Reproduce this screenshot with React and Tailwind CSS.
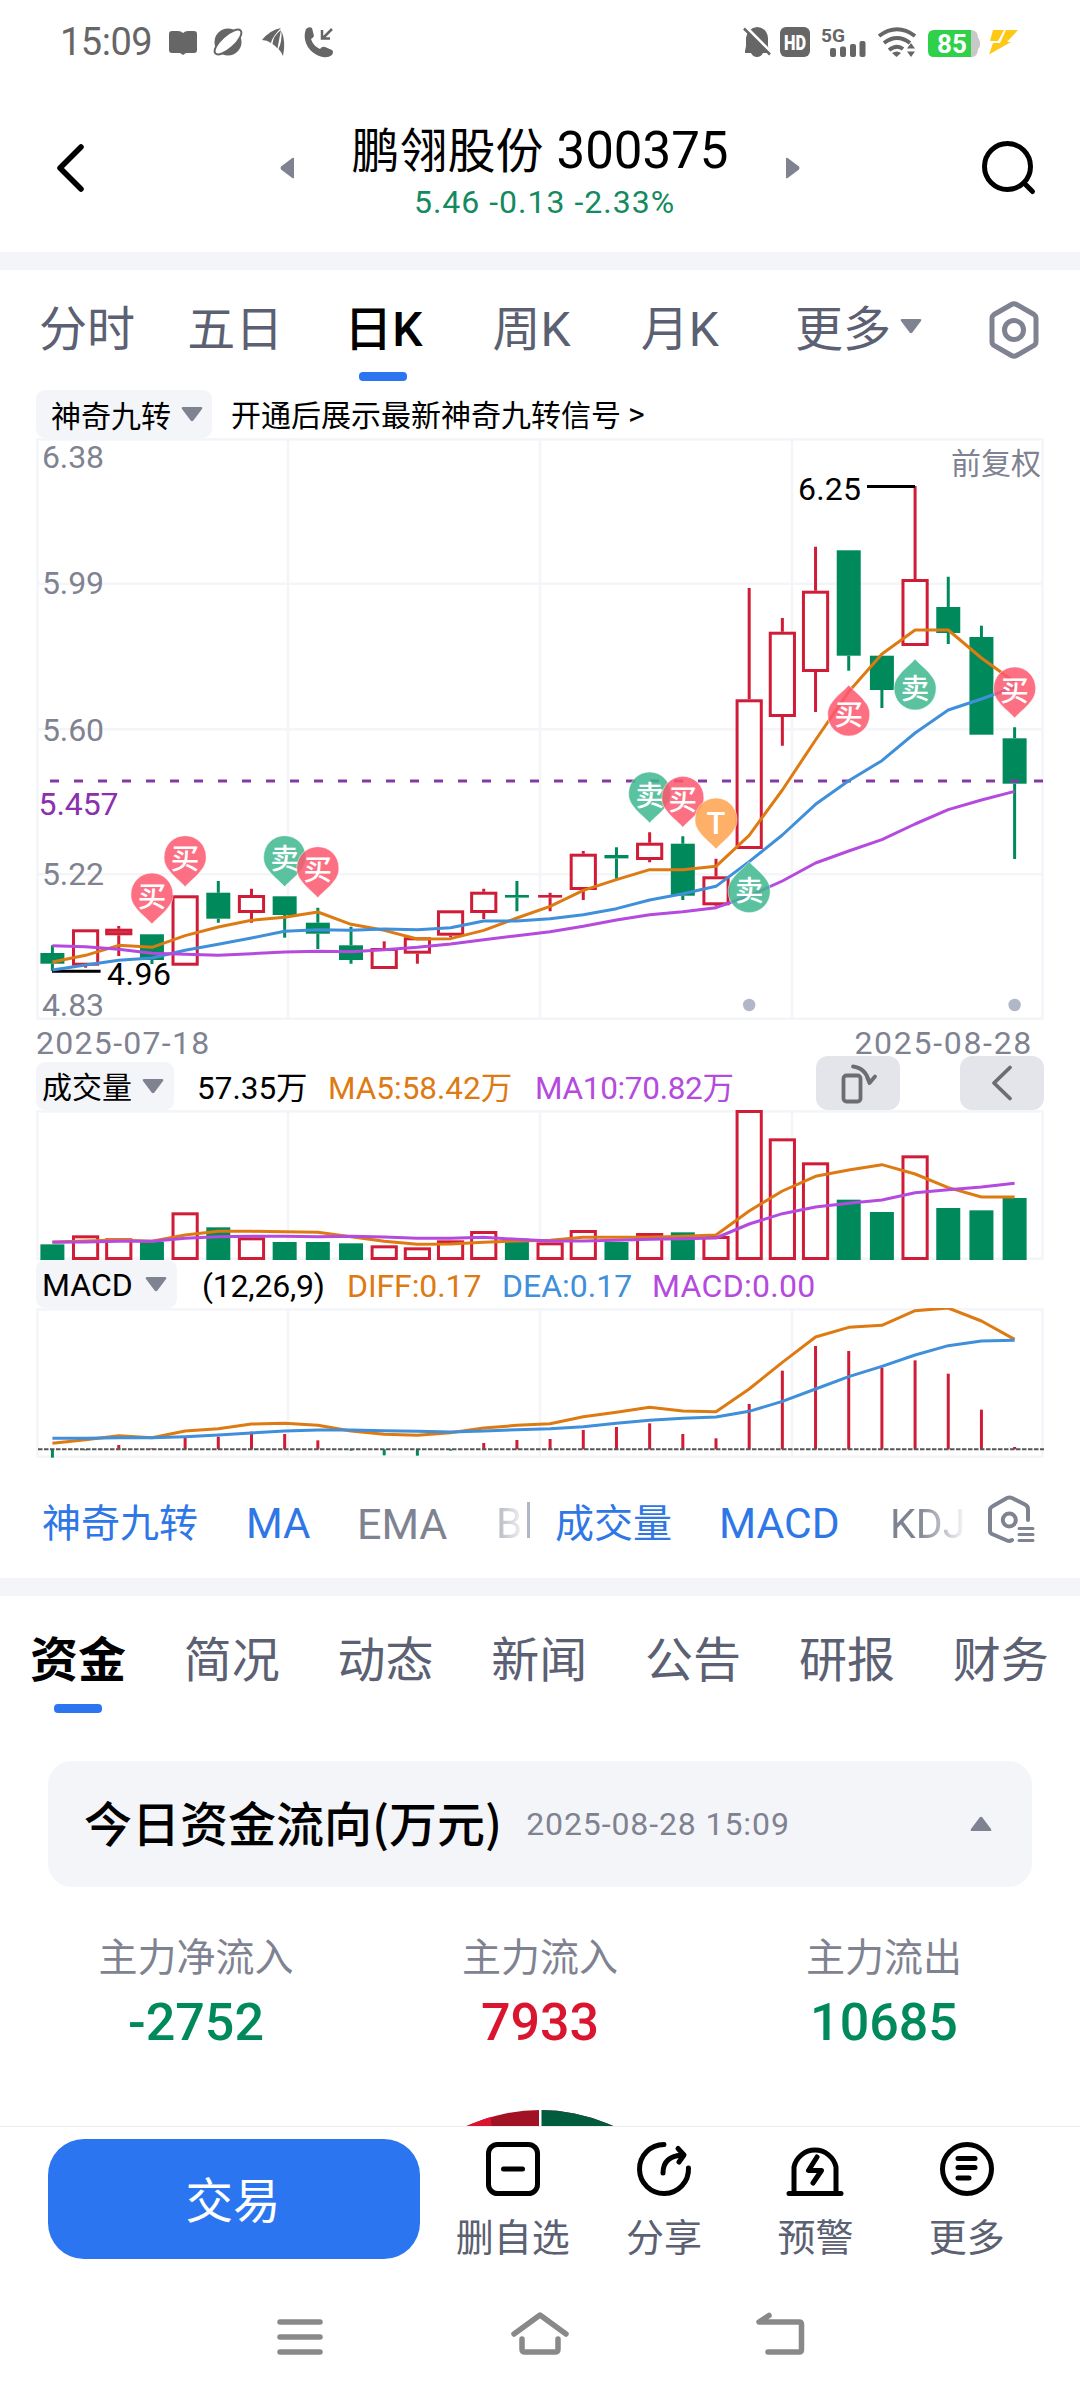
import React from "react";

const RED = "#d01c36";
const GREEN = "#008a5c";
const ORANGE = "#de7a12";
const BLUE = "#3f8fdb";
const PURPLE = "#b54ade";
const GRID = "#f4f5f9";

const X = (i) => 52.4 + i * 33.18;
const third = (base, list) => list.map((v) => base + v / 3);

/* kind, body top, body bottom, wick top, wick bottom */
const candles = [
  ["g", 953, 963.7, 945.3, 970.7],
  ["r", 929.3, 965.7, 929.3, 967.7],
  ["r", 928.7, 935.3, 926, 956],
  ["g", 934.3, 960, 934.3, 964],
  ["r", 895.3, 965.7, 895.3, 965.7],
  ["g", 892.7, 918.7, 881, 922.7],
  ["r", 895, 913, 888.7, 922.7],
  ["g", 896.3, 915, 896.3, 937.7],
  ["g", 922.7, 933.7, 907.7, 949],
  ["g", 945.3, 960, 926.7, 963.7],
  ["r", 948, 969, 941.3, 969],
  ["r", 937.3, 953.7, 937.3, 963.7],
  ["r", 910.3, 935.7, 910.3, 937.3],
  ["r", 891.7, 913, 888.7, 919],
  ["g", 895, 897.6, 881, 911.3],
  ["r", 895, 897.6, 892.7, 911.3],
  ["r", 853.7, 890, 851, 900],
  ["g", 855, 858.4, 847.3, 878.7],
  ["r", 842.7, 860, 832.3, 862.3],
  ["g", 843.7, 895.7, 836.3, 900],
  ["r", 876.3, 905.3, 858.7, 906.3],
  ["r", 699.3, 849, 588, 849],
  ["r", 631.7, 717, 618, 745.7],
  ["r", 590.7, 672, 546.7, 712],
  ["g", 550.3, 655.7, 550.3, 670.7],
  ["g", 655.7, 690, 655.7, 708],
  ["r", 579, 646, 486, 646],
  ["g", 607, 633, 576.7, 644],
  ["g", 637, 734.7, 625.7, 734.7],
  ["g", 738.3, 783.7, 727.3, 859],
];

const ma5 = [
  ...third(740, [666, 646, 616, 622, 587, 561, 541, 532, 516, 553, 571, 597, 596, 571, 534, 499, 451, 419, 389, 389, 379, 286, 150, 0]),
  691.7, 654, 630, 630, 658, 682,
];
const ma10 = [
  ...third(740, [690, 675, 661, 654, 631, 613, 594, 574, 569, 571, 567, 569, 563, 543, 543, 536, 524, 506, 480, 461, 439, 365, 285, 193, 122, 62]),
  733, 710, 699, 687,
];
const ma20 = third(740, [617, 620, 628, 640, 643, 646, 641, 636, 634, 635, 629, 622, 612, 599, 587, 575, 559, 540, 524, 515, 503, 468, 423, 369, 333, 299, 252, 209, 180, 154]);

const volTop = third(1040, [613, 586, 595, 606, 517, 562, 592, 606, 606, 610, 616, 622, 601, 573, 596, 607, 570, 606, 579, 577, 588, 210, 295, 367, 479, 516, 346, 504, 511, 474]);
const vol5 = third(1040, [606, 603, 600, 604, 585, 574, 574, 575, 577, 590, 604, 613, 612, 607, 603, 601, 592, 592, 592, 589, 585, 513, 453, 409, 390, 374, 402, 443, 471, 471]);
const vol10 = third(1040, [607, 606, 604, 604, 595, 590, 589, 589, 590, 589, 591, 595, 595, 592, 598, 603, 603, 601, 598, 596, 594, 552, 521, 501, 490, 480, 458, 449, 441, 430]);

const diff = third(1040, [1210, 1199, 1187, 1193, 1173, 1166, 1152, 1150, 1156, 1173, 1183, 1186, 1178, 1164, 1156, 1151, 1130, 1117, 1102, 1113, 1115, 1047, 967, 891, 862, 856, 812, 804, 843, 898]);
const dea = third(1040, [1195, 1195, 1193, 1193, 1190, 1185, 1179, 1173, 1170, 1170, 1172, 1174, 1176, 1173, 1169, 1166, 1160, 1150, 1141, 1135, 1131, 1114, 1084, 1047, 1010, 979, 945, 917, 903, 901]);
const hist = third(1040, [1253, 1231, 1215, 1225, 1193, 1190, 1175, 1182, 1201, 1232, 1246, 1247, 1232, 1209, 1200, 1197, 1170, 1161, 1150, 1182, 1195, 1092, 992, 918, 933, 983, 961, 1001, 1109, 1221]);

/* candle index, tip y, direction of the tip, kind */
const pins = [
  [3, 924, "down", "买"],
  [4, 886.7, "down", "买"],
  [7, 886.7, "down", "卖"],
  [8, 897.7, "down", "买"],
  [18, 823, "down", "卖"],
  [19, 827.3, "down", "买"],
  [20, 849, "down", "T"],
  [21, 861.7, "up", "卖"],
  [24, 685, "up", "买"],
  [26, 659, "up", "卖"],
  [29, 718, "down", "买"],
];
const pinFill = { 买: "#fd576e", 卖: "#3eb78f", T: "#ffa24d" };

const NUM = "Roboto, sans-serif";
const CJK = '"Noto Sans CJK SC", sans-serif';

function Line({ data, color }) {
  return (
    <polyline
      fill="none"
      stroke={color}
      strokeWidth="3"
      strokeLinejoin="round"
      points={data.map((y, i) => `${X(i)},${y}`).join(" ")}
    />
  );
}

function Frame({ top, bottom, rows = [] }) {
  return (
    <g stroke={GRID} strokeWidth="2.6" fill="none">
      <rect x="37.5" y={top + 1.4} width="1005" height={bottom - top - 2.7} />
      {[288, 540, 792].map((x) => (
        <line key={x} x1={x} x2={x} y1={top} y2={bottom} />
      ))}
      {rows.map((y) => (
        <line key={y} x1="37.5" x2="1042.5" y1={y} y2={y} />
      ))}
    </g>
  );
}

function Label({ x, y, w, fill = "#7f8391", children }) {
  return (
    <text x={x} y={y} fill={fill} fontFamily={NUM} fontSize="32" textLength={w} lengthAdjust="spacing">
      {children}
    </text>
  );
}

function Pin({ i, tip, dir, kind }) {
  const x = X(i);
  const flip = dir === "up" ? -1 : 1;
  const cy = tip - flip * 30;
  const baseline = kind === "T" ? 15 : dir === "up" ? 9.5 : 12.5;
  return (
    <g>
      <path
        transform={`translate(${x} ${tip}) scale(1 ${flip})`}
        d="M0 0C-5 -6 -13 -11 -18 -19C-21 -24 -21 -27 -21 -30A21 21 0 0 1 21 -30C21 -27 21 -24 18 -19C13 -11 5 -6 0 0Z"
        fill={pinFill[kind]}
        fillOpacity="0.85"
        stroke="#fff"
        strokeOpacity="0.5"
        strokeWidth="1"
      />
      <text
        x={x}
        y={cy + baseline}
        textAnchor="middle"
        fill="#fff"
        fontFamily={kind === "T" ? NUM : CJK}
        fontWeight="500"
        fontSize={kind === "T" ? 31 : 28.5}
      >
        {kind}
      </text>
    </g>
  );
}

function PriceChart() {
  return (
    <svg className="block h-[582px] w-full shrink-0" viewBox="0 438 1080 582">
      <Frame top={438} bottom={1020} rows={[583.8, 729.2, 874.2]} />
      <Label x="42" y="468" w="62">6.38</Label>
      <Label x="42" y="594.3" w="62">5.99</Label>
      <Label x="42" y="740.6" w="62">5.60</Label>
      <Label x="42" y="885.3" w="62">5.22</Label>
      <Label x="42" y="1016" w="62">4.83</Label>
      <text x="951" y="473.5" fill="#7f8391" fontFamily={CJK} fontSize="30">前复权</text>
      {candles.map(([k, t, b, wt, wb], i) => {
        const x = X(i);
        const c = k === "g" ? GREEN : RED;
        return (
          <g key={i}>
            <path d={`M${x} ${wt}V${t}M${x} ${b}V${wb}`} stroke={c} strokeWidth="3" />
            {k === "g" || b - t < 4 ? (
              <rect x={x - 12} y={t} width="24" height={b - t} fill={c} />
            ) : (
              <rect x={x - 12.1} y={t + 1.5} width="24.2" height={b - t - 3} fill={b - t < 8 ? "#f4586e" : "#fff"} stroke={c} strokeWidth="3" />
            )}
          </g>
        );
      })}
      <path d="M867 486.5H915M52 971.2H100.6" stroke="#000" strokeWidth="3" />
      <Label x="798" y="500.4" w="63" fill="#000">6.25</Label>
      <Label x="107" y="985.2" w="64" fill="#000">4.96</Label>
      <line x1="50" x2="1043" y1="781" y2="781" stroke="#8639a6" strokeWidth="3" strokeDasharray="9 15" />
      <Label x="38.500" y="815.2" w="80" fill="#8a2fae">5.457</Label>
      <Line data={ma5} color={ORANGE} />
      <Line data={ma10} color={BLUE} />
      <Line data={ma20} color={PURPLE} />
      {pins.map(([i, tip, dir, kind]) => (
        <Pin key={i} i={i} tip={tip} dir={dir} kind={kind} />
      ))}
      <circle cx={X(21)} cy="1005" r="6.200" fill="#b1b7c6" />
      <circle cx={X(29)} cy="1005" r="6.200" fill="#b1b7c6" />
    </svg>
  );
}

function VolumeChart() {
  return (
    <svg className="block h-[150px] w-full shrink-0" viewBox="0 1110 1080 150">
      <Frame top={1110} bottom={1260} />
      {candles.map(([k], i) =>
        k === "g" ? (
          <rect key={i} x={X(i) - 12} y={volTop[i]} width="24" height={1260 - volTop[i]} fill={GREEN} />
        ) : (
          <rect key={i} x={X(i) - 12.1} y={volTop[i] + 1.5} width="24.2" height={1258.5 - volTop[i] - 1.5} fill="#fff" stroke={RED} strokeWidth="3" />
        )
      )}
      <Line data={vol5} color={ORANGE} />
      <Line data={vol10} color={PURPLE} />
    </svg>
  );
}

function MacdChart() {
  return (
    <svg className="block h-[150px] w-full shrink-0" viewBox="0 1308 1080 150">
      <Frame top={1308} bottom={1458} />
      {hist.map((y, i) => (
        <line key={i} x1={X(i)} x2={X(i)} y1="1449.3" y2={y} stroke={y > 1449.4 ? GREEN : RED} strokeWidth="3" />
      ))}
      <line x1="38" x2="1044" y1="1449.3" y2="1449.3" stroke="#555" strokeWidth="2" strokeDasharray="4.5 1.5" />
      <Line data={diff} color={ORANGE} />
      <Line data={dea} color={BLUE} />
    </svg>
  );
}

function Triangle({ className, up }) {
  return (
    <svg className={className} width="22" height="16" viewBox="0 0 22 16" fill="#7f8391">
      <path d={up ? "M9.6 1.6Q11 0 12.4 1.6L21 13Q22 15 20 15H2Q0 15 1 13Z" : "M2 1H20Q22 1 21 3L12.4 14.4Q11 16 9.6 14.4L1 3Q0 1 2 1Z"} />
    </svg>
  );
}

function StatusBar() {
  return (
    <div className="flex h-[84px] items-center justify-between pl-[60px] pr-[60px] text-[#666]">
      <div className="flex items-center">
        <span className="w-[108px] font-[Roboto] text-[38px] leading-none tracking-[-0.5px]">15:09</span>
        <svg width="170" height="32" viewBox="168 26 170 32" fill="#666">
          <path d="M169 34Q169 31 172 31H178Q181 31 183 33Q185 31 188 31H194Q197 31 197 34V50Q197 53 194 53H186L183 55L180 53H172Q169 53 169 50Z" />
          <circle cx="228" cy="42" r="13.500" />
          <ellipse cx="228" cy="42" rx="17" ry="6.500" transform="rotate(-42 228 42)" fill="#fff" stroke="#666" strokeWidth="2" />
          <path d="M220.500 43.500L232 33L236 38L224 48.500Z" fill="#fff" />
          <path d="M262 40Q270 30 281 28Q272 37 271 43Q267 40 262 40ZM272.500 44Q273 36 281 30Q279 40 277.500 48.500Q275.500 46 272.500 44ZM278.500 49Q282 42 281.500 31Q286 42 283 56Q281.500 52 278.500 49Z" />
          <path d="M306 29Q309 26 312 28L314 36Q313 38 311 39Q313 46 320 49Q322 46 325 47L332 50Q334 52 332 55Q328 58 323 57C311 55 301 42 306 29Z" />
          <path d="M332 29L323 38M322 30V38.5H330" fill="none" stroke="#666" strokeWidth="2.5" />
        </svg>
      </div>
      <svg width="278" height="32" viewBox="742 26 278 32" fill="#666">
        <path d="M757 27Q767 28 768 38V46L769 51V53H745V51L746 46V38Q748 28 757 27ZM751 53H763Q761 57 757 57Q753 57 751 53Z" />
        <path d="M745 26L771 52" stroke="#fff" strokeWidth="3" />
        <path d="M744 28.500L770 54.500" stroke="#666" strokeWidth="2.600" />
        <rect x="780" y="27" width="30" height="30" rx="6" />
        <text x="784" y="49.500" fill="#fff" fontFamily={NUM} fontWeight="900" fontSize="21" textLength="22" lengthAdjust="spacingAndGlyphs">HD</text>
        <text x="821" y="42" fontFamily={NUM} fontWeight="700" fontSize="19" textLength="24" lengthAdjust="spacingAndGlyphs">5G</text>
        <rect x="830" y="48" width="6" height="9" rx="2" />
        <rect x="840" y="46.500" width="6" height="10.500" rx="2" />
        <rect x="850" y="44" width="6" height="13" rx="2" />
        <rect x="859.500" y="41" width="6" height="16" rx="2" />
        <g fill="none" stroke="#666" strokeWidth="4">
          <path d="M879 36Q897 22.500 915 36" />
          <path d="M884 43Q897 33 910 43" />
          <path d="M889 50Q897 44 903 49" />
        </g>
        <path d="M892 53Q897 50 901 53L896.500 57Z" />
        <path d="M911 43L915 48.500H907ZM911 57L907 51.500H915Z" />
        <path d="M971 30H972Q978 31 978 38Q980 39 980 43.500Q980 48 978 49Q978 56 972 57H971Z" fill="#c8c8c8" />
        <path d="M934 30H971V57H934Q928 57 928 51V36Q928 30 934 30Z" fill="#2fd14a" />
        <text x="937" y="53" fill="#fff" fontFamily={NUM} fontWeight="700" fontSize="26" textLength="30">85</text>
        <path d="M993 30H1004L998 41H990ZM1006 30H1018L1007 42H1011L989 54.500L993 43H1000Z" fill="#ffc814" />
      </svg>
    </div>
  );
}

function Header() {
  return (
    <div className="flex h-[168px] items-start pl-[46px] pr-[43px] pt-[38px]">
      <svg className="mt-[18px]" width="50" height="56" viewBox="46 140 50 56" fill="none" stroke="#000" strokeWidth="5.5" strokeLinecap="round" strokeLinejoin="round">
        <path d="M81 147L60 168L81 189" />
      </svg>
      <div className="ml-[183px] flex">
        <svg className="mt-[35px]" width="16" height="22" viewBox="0 0 16 22" fill="#7f8391"><path d="M15 1V21Q14 22 12 20L2 12.400Q1 11 2 9.600L12 2Q14 0 15 1Z" /></svg>
        <div className="flex w-[490px] flex-col items-center">
          <div className="flex h-[54px] items-center leading-none text-black">
            <span className="-mt-1 font-['Noto_Sans_CJK_SC'] text-[48px] leading-[48px]">鹏翎股份</span>
            <span className="ml-[13px] mt-[3px] font-[Roboto] text-[51px] leading-[48px]">300375</span>
          </div>
          <div className="ml-[9px] mt-[8px] font-[Roboto] text-[32px] leading-[36px] tracking-[1px] text-[#138a60]">5.46 -0.13 -2.33%</div>
        </div>
        <svg className="mt-[35px]" width="16" height="22" viewBox="0 0 16 22" fill="#7f8391"><path d="M1 1V21Q2 22 4 20L14 12.400Q15 11 14 9.600L4 2Q2 0 1 1Z" /></svg>
      </div>
      <svg className="ml-auto mt-[16px]" width="58" height="58" viewBox="978 138 58 58" fill="none" stroke="#000" strokeWidth="5" strokeLinecap="round">
        <circle cx="1006.500" cy="166.500" r="23" />
        <path d="M1023 183L1031.500 191.500" />
      </svg>
    </div>
  );
}

function PeriodTabs() {
  const tabs = ["分时", "五日", "日K", "周K", "月K"];
  return (
    <div className="flex h-[120px] pl-[13px] pt-[30px] font-[Roboto,'Noto_Sans_CJK_SC']">
      {tabs.map((t) => (
        <div key={t} className="flex w-[148.200px] flex-col items-center">
          <span className={t === "日K" ? "h-[72px] text-[48px] font-medium leading-[60px] text-black" : "h-[72px] text-[48px] leading-[60px] text-[#5b6072]"}>{t}</span>
          {t === "日K" && <span className="h-[9px] w-12 rounded-[4px] bg-[#2b76f0]" />}
        </div>
      ))}
      <div className="ml-[41px] flex h-[60px] items-center">
        <span className="text-[48px] leading-[60px] text-[#5b6072]">更多</span>
        <Triangle className="-mt-2 ml-[9px]" />
      </div>
      <svg className="ml-auto mr-[38px]" width="56" height="60" viewBox="0 0 56 60" fill="none" stroke="#7f8391" strokeWidth="5">
        <path d="M25.500 4.500Q28 3 30.500 4.500L48 14.500Q50 15.800 50 18.500V41.500Q50 44 48 45.500L30.500 55.500Q28 57 25.500 55.500L8 45.500Q6 44 6 41.500V18.500Q6 15.800 8 14.500Z" />
        <circle cx="28" cy="30" r="9.500" />
      </svg>
    </div>
  );
}

function Chip({ className, children }) {
  return (
    <div className={`flex h-12 shrink-0 items-center justify-between rounded-[9px] bg-[#f4f5f9] ${className}`}>
      <span>{children}</span>
      <Triangle />
    </div>
  );
}

function IndicatorRow() {
  return (
    <div className="flex h-[120px] items-center pl-[42px] pt-[3px] font-['Noto_Sans_CJK_SC'] text-[39px] leading-[48px]">
      <div className="flex w-[485px] shrink-0 items-center">
        <span className="w-[204px] shrink-0 text-[#2f76e6]">神奇九转</span>
        <span className="w-[111px] shrink-0 pt-[8px] font-[Roboto] text-[42px] text-[#2f76e6]">MA</span>
        <span className="w-[139px] shrink-0 pt-[8px] font-[Roboto] text-[43px] text-[#7f8391]">EMA</span>
        <span className="bg-gradient-to-r from-[#b4b7c1] to-[#f0f0f3] bg-clip-text pt-[8px] font-[Roboto] text-[42px] text-transparent">B</span>
      </div>
      <div className="h-9 w-[3px] bg-[#b1b7c6]" />
      <div className="flex w-[442px] shrink-0 items-center pl-[25px]">
        <span className="w-[164px] shrink-0 text-[#2f76e6]">成交量</span>
        <span className="w-[171px] shrink-0 pt-[8px] font-[Roboto] text-[42.500px] text-[#2f76e6]">MACD</span>
        <span className="w-[78px] shrink-0 bg-gradient-to-r from-[#7f8391] from-35% to-white bg-clip-text pt-[8px] font-[Roboto] text-[41px] text-transparent">KDJ</span>
      </div>
      <svg className="ml-[12px] shrink-0" width="56" height="52" viewBox="984 1495 56 52" fill="none" stroke="#7f8391" strokeWidth="4" strokeLinecap="round" strokeLinejoin="round">
        <path d="M1028 1521V1510Q1028 1507 1025 1505.500L1012 1499Q1009.500 1498 1007 1499L993 1507Q990 1508.500 990 1511V1532Q990 1534 992 1535L1007 1541.500Q1009.500 1542.500 1012 1541" />
        <circle cx="1009.300" cy="1521" r="6.500" />
        <path d="M1019 1529.500H1033M1019 1535.500H1033M1019 1541.500H1033" strokeWidth="3" />
      </svg>
    </div>
  );
}

function InfoTabs() {
  const tabs = ["资金", "简况", "动态", "新闻", "公告", "研报", "财务"];
  return (
    <div className="flex h-[165px] pl-px pt-[30px] font-['Noto_Sans_CJK_SC'] text-[48px] leading-[60px] text-[#5b6072]">
      {tabs.map((t, i) => (
        <div key={t} className="flex w-[153.800px] flex-col items-center">
          <span className={i === 0 ? "h-[78px] font-bold text-black" : "h-[78px]"}>{t}</span>
          {i === 0 && <span className="h-[9px] w-12 rounded-[4px] bg-[#2b76f0]" />}
        </div>
      ))}
    </div>
  );
}

function Metric({ label, value, color }) {
  return (
    <div className="flex w-[344px] flex-col items-center">
      <span className="font-['Noto_Sans_CJK_SC'] text-[39px] leading-[48px] text-[#7f8391]">{label}</span>
      <span className={`mt-[15px] font-[Roboto] text-[52px] font-medium leading-[60px] ${color}`}>{value}</span>
    </div>
  );
}

function Action({ label, children }) {
  return (
    <div className="flex w-[151.400px] flex-col items-center">
      <svg width="60" height="60" viewBox="0 0 60 60" fill="none" stroke="#000" strokeWidth="5" strokeLinecap="round" strokeLinejoin="round">
        {children}
      </svg>
      <span className="mt-[12px] font-['Noto_Sans_CJK_SC'] text-[38px] leading-[48px] text-[#5b6072]">{label}</span>
    </div>
  );
}

export default function App() {
  return (
    <div className="flex h-[2400px] w-[1080px] flex-col overflow-hidden whitespace-nowrap bg-white">
      <StatusBar />
      <Header />
      <div className="h-[18px] bg-[#f4f5f9]" />
      <PeriodTabs />

      <div className="flex h-12 items-center pl-[36px] font-['Noto_Sans_CJK_SC'] text-[30px] leading-[46px] text-black">
        <Chip className="w-[176px] pl-[15px] pr-[9px]">神奇九转</Chip>
        <span className="ml-[19px] pb-[2px]">开通后展示最新神奇九转信号</span>
        <span className="ml-[7px] font-[Roboto] text-[32px]">&gt;</span>
      </div>
      <PriceChart />
      <div className="flex h-[42px] justify-between pl-[36px] pr-[47px] font-[Roboto] text-[32px] leading-[46px] text-[#7f8391]">
        <span className="tracking-[1.300px]">2025-07-18</span>
        <span className="tracking-[1.700px]">2025-08-28</span>
      </div>

      <div className="flex h-12 items-center pl-[36px] pr-[36px] font-[Roboto,'Noto_Sans_CJK_SC'] text-[31.500px] leading-[48px]">
        <Chip className="w-[138px] pl-[6px] pr-[10px] text-[30px]"><span className="relative top-[2px]">成交量</span></Chip>
        <span className="ml-[23px] w-[131px] pt-[5px] text-black">57.35万</span>
        <span className="w-[207px] pt-[5px] text-[#de7a12]">MA5:58.42万</span>
        <span className="pt-[5px] tracking-[-0.300px] text-[#b54ade]">MA10:70.82万</span>
        <div className="-mt-1.5 ml-auto flex h-[54px] w-[84px] items-center justify-center rounded-[12px] bg-[#e4e5ea]">
          <svg width="40" height="44" viewBox="840 1060 40 44" fill="none" stroke="#6b6d72" strokeWidth="3.800" strokeLinecap="round" strokeLinejoin="round">
            <rect x="845.500" y="1074.500" width="17" height="26" rx="3" />
            <path d="M855 1065.500Q868 1067 871.500 1082M871.500 1082L877 1075.500M871.500 1082L869 1076" />
          </svg>
        </div>
        <div className="-mt-1.5 ml-[60px] flex h-[54px] w-[84px] items-center justify-center rounded-[12px] bg-[#e4e5ea]">
          <svg width="24" height="40" viewBox="0 0 24 40" fill="none" stroke="#6b6d72" strokeWidth="3.800" strokeLinecap="round" strokeLinejoin="round">
            <path d="M20 4.500L4 20L20 35.500" />
          </svg>
        </div>
      </div>
      <VolumeChart />

      <div className="flex h-12 items-center pl-[36px] font-[Roboto] text-[32px] leading-[48px]">
        <Chip className="w-[141px] pl-[6px] pr-[10px]"><span className="relative top-px">MACD</span></Chip>
        <span className="ml-[25px] w-[145px] pt-[3px] tracking-[-0.200px] text-black">(12,26,9)</span>
        <span className="w-[155px] pt-[3px] tracking-[-0.100px] text-[#de7a12]">DIFF:0.17</span>
        <span className="w-[150px] pt-[3px] text-[#3f8fdb]">DEA:0.17</span>
        <span className="pt-[3px] tracking-[0.300px] text-[#b54ade]">MACD:0.00</span>
      </div>
      <MacdChart />
      <IndicatorRow />

      <div className="h-[18px] bg-[#f4f5f9]" />
      <InfoTabs />

      <div className="mx-12 flex h-[126px] items-center rounded-[24px] bg-[#f4f5f9] pl-[36px] pr-[40px]">
        <span className="-mt-1.5 font-['Noto_Sans_CJK_SC'] text-[48px] font-medium leading-[60px] text-black">今日资金流向(万元)</span>
        <span className="ml-[24px] font-[Roboto] text-[32px] leading-[60px] tracking-[0.900px] text-[#7f8391]">2025-08-28 15:09</span>
        <Triangle className="ml-auto" up />
      </div>

      <div className="flex h-[223px] pl-[24px] pt-[43px]">
        <Metric label="主力净流入" value="-2752" color="text-[#008a5c]" />
        <Metric label="主力流入" value="7933" color="text-[#d9152f]" />
        <Metric label="主力流出" value="10685" color="text-[#008a5c]" />
      </div>
      <svg className="block h-[16px] w-full" viewBox="0 2110 1080 16">
        <circle cx="540" cy="2286" r="176" fill="#a11224" />
        <clipPath id="pie"><circle cx="540" cy="2286" r="176" /></clipPath>
        <path d="M440 2100H489L492 2130H440Z" fill="#d9152f" clipPath="url(#pie)" />
        <path d="M540 2110A176 176 0 0 1 716 2286H540Z" fill="#005c3c" />
        <rect x="539" y="2108" width="2.500" height="20" fill="#fff" />
      </svg>

      <div className="flex h-[148px] border-t border-[#ededf0] pl-12 pt-[12px]">
        <div className="flex h-[120px] w-[372px] items-center justify-center rounded-[36px] bg-[#2b76f0] pb-[3px] pr-[2px] font-['Noto_Sans_CJK_SC'] text-[47.500px] leading-[60px] text-white">交易</div>
        <div className="ml-[17px] flex">
          <Action label="删自选">
            <rect x="5.500" y="5.500" width="49" height="49" rx="9" />
            <path d="M20.500 30H39.500" />
          </Action>
          <Action label="分享">
            <path d="M30 5.500A24.500 24.500 0 1 0 54.500 29" />
            <path d="M29 34Q29 17 49 16M44 9.500L50 16L45 23" />
          </Action>
          <Action label="预警">
            <path d="M4 54.500H56M9 54V28A21.500 21.500 0 0 1 51 28V54M32 18L23.500 31.500H36.500L28 44" />
          </Action>
          <Action label="更多">
            <circle cx="30" cy="30" r="24.500" />
            <path d="M21 19.500H38M21 28.500H38M21 39H32" />
          </Action>
        </div>
      </div>

      <svg className="block h-[126px] w-full" viewBox="0 2274 1080 126" fill="none" stroke="#898989" strokeWidth="5.500" strokeLinecap="round" strokeLinejoin="round">
        <path d="M280 2322H320M280 2337H320M280 2352H320" />
        <path d="M514 2334L540 2315L566 2334M522 2339V2349Q522 2352 525 2352H555Q558 2352 558 2349V2339" />
        <path d="M769 2315.500L759 2322H799Q801.500 2322 801.500 2324.500V2349.500Q801.500 2352 799 2352H768" />
      </svg>
    </div>
  );
}
